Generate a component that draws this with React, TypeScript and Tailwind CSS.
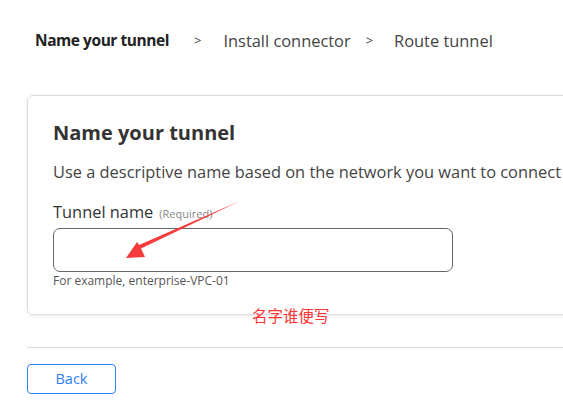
export default function App() {
  return (
    <div className="relative w-[563px] h-[410px] overflow-hidden bg-white text-[#333] [font-family:'Open_Sans',sans-serif]">
      <div className="flex items-center h-[82px] pl-[35px] text-[16.4px] text-[#444]">
        <span className="font-bold text-[#222] text-[15.5px] tracking-[-0.45px]">Name your tunnel</span>
        <span className="ml-[25px] mr-[22px] text-[13px]">&gt;</span>
        <span>Install connector</span>
        <span className="ml-[15px] mr-[21px] text-[13px]">&gt;</span>
        <span>Route tunnel</span>
      </div>
      <div className="ml-[27px] mt-[13px] w-[600px] h-[220px] rounded-[6px] border border-[#dcdcdc] shadow-[0_1px_4px_rgba(0,0,0,0.08)] pl-[25px] pt-[22px]">
        <h1 className="text-[20px] font-bold leading-[30px] text-[#333]">Name your tunnel</h1>
        <p className="mt-[13px] text-[16.4px] leading-[22px] text-[#444] whitespace-nowrap">Use a descriptive name based on the network you want to connect</p>
        <div className="mt-[17px] flex items-baseline gap-[6px]">
          <span className="text-[16.4px] text-[#333]">Tunnel name</span>
          <span className="text-[11px] text-[#888]">(Required)</span>
        </div>
        <div className="mt-[3px] w-[400px] h-[44px] rounded-[7px] border border-[#666]" />
        <p className="mt-[0px] text-[12px] text-[#555]">For example, enterprise-VPC-01</p>
      </div>
      <div className="ml-[27px] mt-[32px] border-t border-[#dcdcdc]" />
      <div className="ml-[27px] mt-[16px]">
        <button className="w-[89px] h-[30px] rounded-[4px] border border-[#2f7ff5] text-[#2f7ff5] text-[14.5px]">Back</button>
      </div>
      <span className="absolute left-[252px] top-[304px] text-[15.5px] text-[#f33] [font-family:'Noto_Sans_CJK_SC',sans-serif]">名字谁便写</span>
      <svg className="absolute left-0 top-0" width="563" height="410">
        <polygon points="240,201 141,248.5 145,257 126,258 137,242 139,245" fill="#f43c3c" />
      </svg>
    </div>
  );
}
